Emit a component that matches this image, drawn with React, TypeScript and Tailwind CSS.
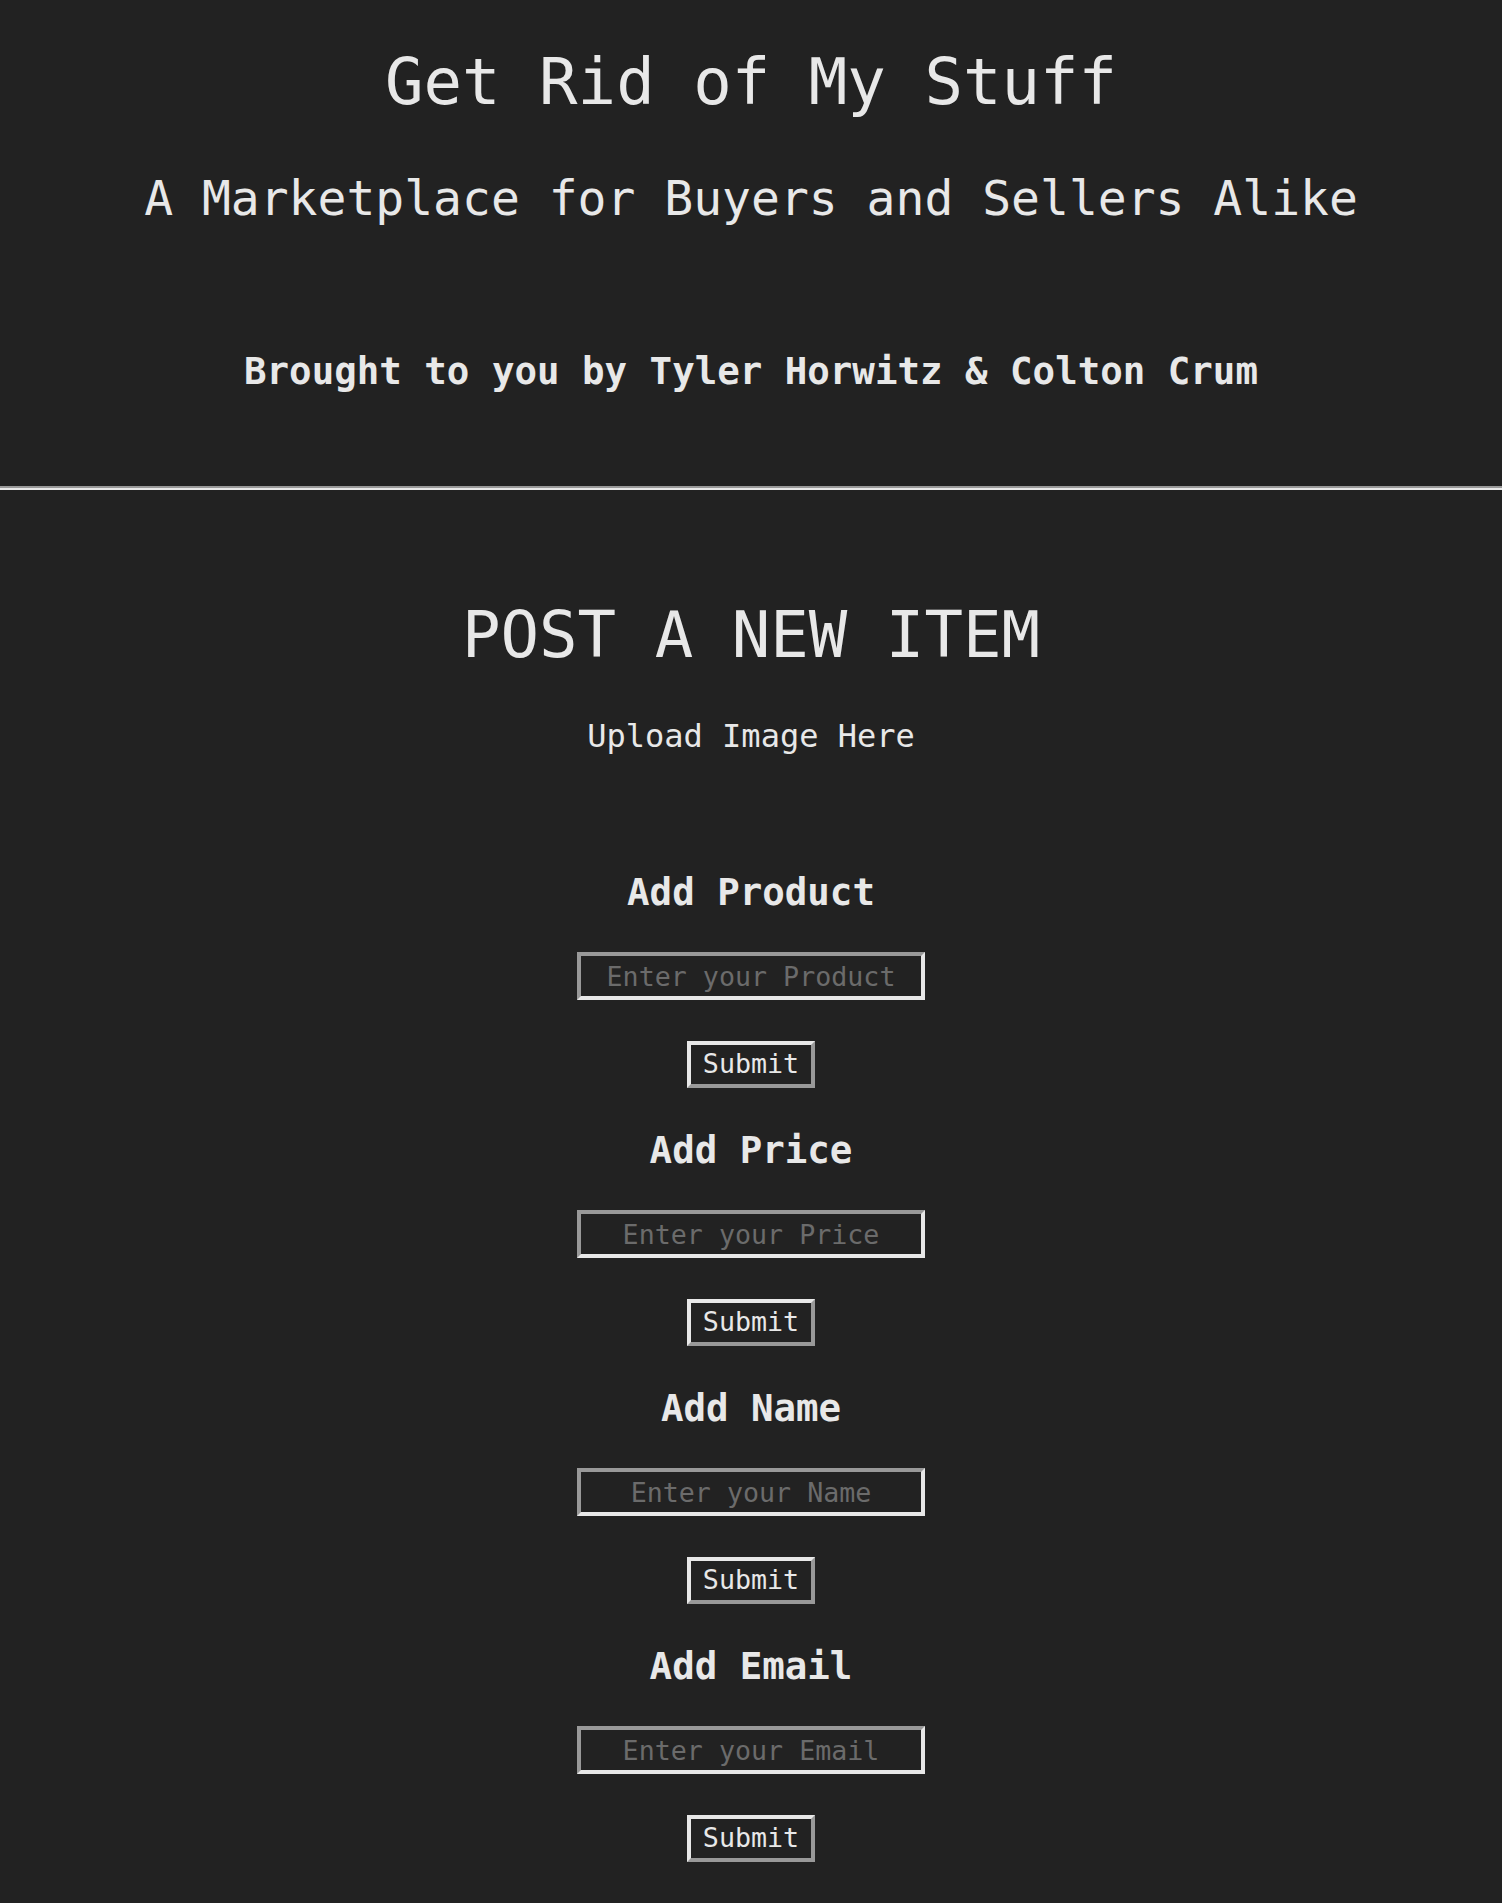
import { useState, ChangeEvent } from 'react'

const fields = ['Product', 'Price', 'Name', 'Email']

function FieldBlock({ label }: { label: string }) {
  const [value, setValue] = useState('')

  const handleChange = (e: ChangeEvent<HTMLInputElement>) => {
    setValue(e.target.value)
  }

  return (
    <div className="flex flex-col items-center pb-[40px]">
      <h3 className="text-[37.44px] leading-[44px] font-bold">Add {label}</h3>
      <input
        type="text"
        value={value}
        onChange={handleChange}
        placeholder={`Enter your ${label}`}
        className="mt-[38px] box-border h-[48px] w-[348px] border-4 border-t-[#999999] border-l-[#999999] border-b-[#e8e8e8] border-r-[#e8e8e8] bg-transparent text-center text-[26.67px] text-[#e8e8e8] outline-none placeholder:text-[#6b6b6b]"
      />
      <button
        type="button"
        className="mt-[41px] box-border h-[47px] w-[128px] border-4 border-t-[#e8e8e8] border-l-[#e8e8e8] border-b-[#999999] border-r-[#999999] bg-transparent text-[26.67px] leading-none text-[#e8e8e8]"
      >
        Submit
      </button>
    </div>
  )
}

export default function App() {
  return (
    <div className="min-h-screen bg-[#222222] text-[#e8e8e8] font-['DejaVu_Sans_Mono',monospace] text-center">
      <header className="flex flex-col items-center pt-[44px]">
        <h1 className="text-[64px] leading-[76px] font-normal">Get Rid of My Stuff</h1>
        <h2 className="mt-[50px] text-[48px] leading-[56px] font-normal">A Marketplace for Buyers and Sellers Alike</h2>
        <h3 className="mt-[123px] text-[37.44px] leading-[44px] font-bold">Brought to you by Tyler Horwitz &amp; Colton Crum</h3>
      </header>

      <hr className="mt-[93px] border-0 border-t-2 border-b-2 border-t-[#999999] border-b-[#e8e8e8]" />

      <main className="flex flex-col items-center">
        <h1 className="mt-[107px] text-[64px] leading-[76px] font-normal">POST A NEW ITEM</h1>
        <p className="mt-[44px] text-[32px] leading-[38px]">Upload Image Here</p>
        <div className="mt-[115px] flex flex-col items-center">
          {fields.map((f) => (
            <FieldBlock key={f} label={f} />
          ))}
        </div>
      </main>
    </div>
  )
}
